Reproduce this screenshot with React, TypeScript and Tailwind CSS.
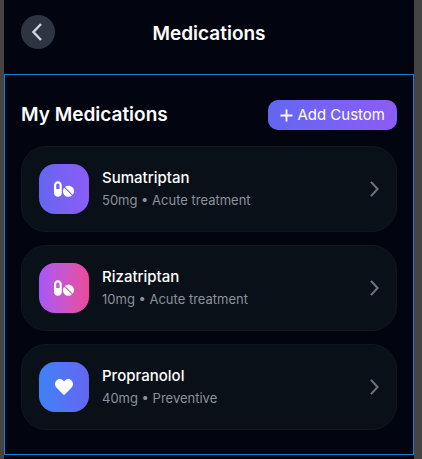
import { FaHeart, FaPills } from "react-icons/fa";
import type { IconType } from "react-icons";

type Medication = {
  name: string;
  detail: string;
  icon: IconType;
  gradient: string;
};

const medications: Medication[] = [
  {
    name: "Sumatriptan",
    detail: "50mg • Acute treatment",
    icon: FaPills,
    gradient: "from-[#6366f1] to-[#8b5cf6]",
  },
  {
    name: "Rizatriptan",
    detail: "10mg • Acute treatment",
    icon: FaPills,
    gradient: "from-[#a855f7] to-[#ec4899]",
  },
  {
    name: "Propranolol",
    detail: "40mg • Preventive",
    icon: FaHeart,
    gradient: "from-[#3b82f6] to-[#6366f1]",
  },
];

function Chevron({ className, d }: { className: string; d: string }) {
  return (
    <svg viewBox="0 0 10 18" fill="none" stroke="currentColor" aria-hidden="true" className={className}>
      <path d={d} strokeWidth="2.4" />
    </svg>
  );
}

function MedicationCard({ name, detail, icon: Icon, gradient }: Medication) {
  return (
    <li>
      <button
        type="button"
        className="flex w-full items-center rounded-[25px] border border-[#12171f] bg-[#0a1018] p-[17px] text-left"
      >
        <span
          className={`flex size-[50px] shrink-0 items-center justify-center rounded-2xl bg-linear-to-r text-white ${gradient}`}
        >
          <Icon className={Icon === FaHeart ? "size-[18px]" : "size-5"} />
        </span>
        <span className="ml-[13px] flex min-w-0 grow flex-col">
          <span className="text-[15px] leading-[22px] font-medium text-white">{name}</span>
          <span className="text-[13px] leading-[22px] text-[#8b919d]">{detail}</span>
        </span>
        <Chevron d="M1 1l7.5 8L1 17" className="h-4 w-[9px] shrink-0 text-[#6b7280]" />
      </button>
    </li>
  );
}

export default function App() {
  return (
    <div className="min-h-screen bg-[#444444] pr-2 pl-1 font-['Inter',sans-serif]">
      <div className="flex min-h-screen flex-col bg-[#02050f]">
        <header className="grid h-[74px] grid-cols-[34px_1fr_34px] items-start px-[17px] pt-[15px]">
          <button
            type="button"
            aria-label="Back"
            className="flex size-[34px] items-center justify-center rounded-full bg-[#2d3442] text-[#d1d5db]"
          >
            <Chevron d="M9 1L1.5 9L9 17" className="mr-0.5 h-[18px] w-2.5" />
          </button>
          <h1 className="text-center text-[19px] leading-[38px] font-semibold text-white">Medications</h1>
        </header>
        <main className="border border-[#0d7fd6] px-4 pt-[25px] pb-6">
          <div className="mb-4 flex items-center justify-between">
            <h2 className="text-[19px] leading-[30px] font-semibold text-white">My Medications</h2>
            <button
              type="button"
              className="flex h-[30px] items-center gap-1 rounded-[10px] bg-linear-to-r from-[#6366f1] to-[#8b5cf6] px-3 text-[15px] text-white"
            >
              <svg viewBox="0 0 13 13" fill="none" stroke="currentColor" aria-hidden="true" className="size-[13px]">
                <path d="M6.5 0.5v12M0.5 6.5h12" strokeWidth="1.8" />
              </svg>
              Add Custom
            </button>
          </div>
          <ul className="flex flex-col gap-[13px]">
            {medications.map((medication) => (
              <MedicationCard key={medication.name} {...medication} />
            ))}
          </ul>
        </main>
      </div>
    </div>
  );
}
